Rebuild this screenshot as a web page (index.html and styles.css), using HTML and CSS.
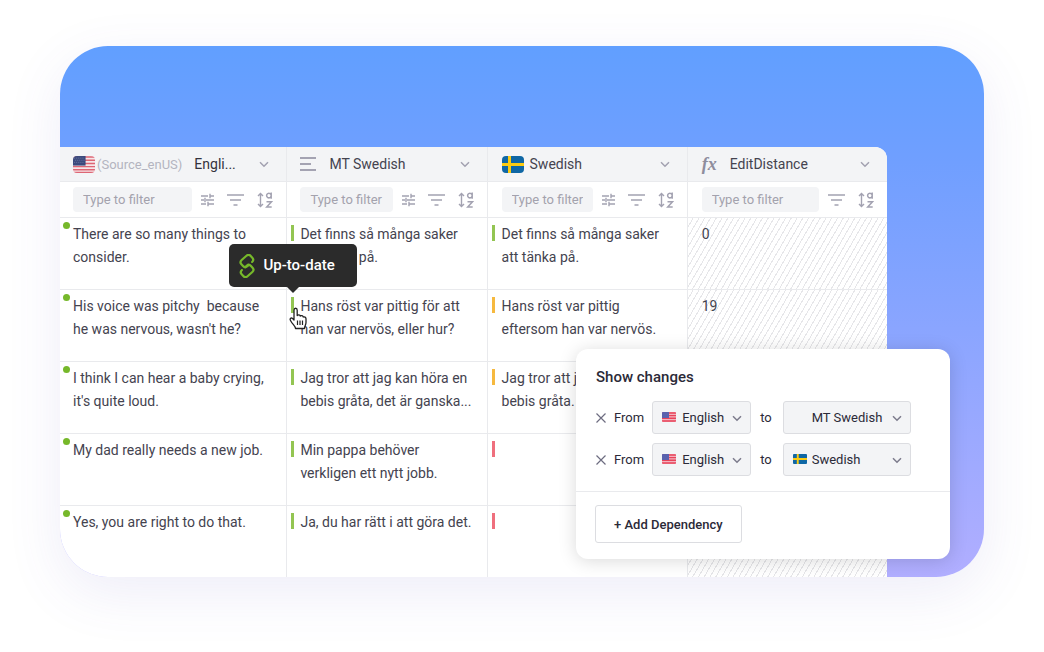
FILE: index.html
```html
<!DOCTYPE html>
<html lang="en">
<head>
  <meta charset="UTF-8" />
  <meta name="viewport" content="width=device-width, initial-scale=1.0"/>
  <title>Translation dependencies</title>
  <link rel="stylesheet" href="styles.css">
</head>
<body>
  <!-- shared icons -->
  <svg class="sprite" aria-hidden="true">
    <symbol id="flag-us" viewBox="0 0 21 16" preserveAspectRatio="none">
      <rect width="21" height="16" fill="#f6e6e9"/>
      <path d="M0 1h21M0 4h21M0 7h21M0 10h21M0 13h21M0 15.5h21" stroke="#dd6674" stroke-width="1.4"/>
      <rect width="12" height="9" fill="#3c4a7d"/>
      <path d="M1 2h10M2 4h9M1 6h10" stroke="#7481ab" stroke-width="0.7" stroke-dasharray="1 1"/>
    </symbol>
    <symbol id="flag-us-small" viewBox="0 0 14 10" preserveAspectRatio="none">
      <rect width="14" height="10" fill="#f3b3bf"/>
      <path d="M0 1h14M0 3.6h14M0 6.3h14M0 9h14" stroke="#e8435a" stroke-width="1.4"/>
      <rect width="7" height="6" fill="#5a62ae"/>
    </symbol>
    <symbol id="flag-se" viewBox="0 0 22 16" preserveAspectRatio="none">
      <rect width="22" height="16" fill="#0f67a5"/>
      <path d="M7.5 0v16M0 8h22" stroke="#fbcb12" stroke-width="3"/>
    </symbol>
    <symbol id="chevron" viewBox="0 0 10 7">
      <path d="M1 1.2l4 4 4-4" fill="none" stroke="currentColor" stroke-width="1.5"/>
    </symbol>
    <symbol id="tune" viewBox="0 0 13 14">
      <path d="M0 3h7M9 3h4M9 0.8v4.4M0 7h3M5 7h8M4 4.8v4.4M0 11h5M7 11h6M7 8.8v4.4" fill="none" stroke="currentColor" stroke-width="1.4"/>
    </symbol>
    <symbol id="filter" viewBox="0 0 17 14">
      <path d="M0 2h17M3 7h11M6.5 12h4" fill="none" stroke="currentColor" stroke-width="1.7"/>
    </symbol>
    <symbol id="sort" viewBox="0 0 16 16">
      <path d="M3.5 1.5v13M1 4l2.5-2.5L6 4M1 12l2.5 2.5L6 12" fill="none" stroke="currentColor" stroke-width="1.4"/>
      <path d="M14.2 0.5v6.2M14.2 3.5a2.3 2.3 0 1 0 0 .1M9.5 9.7h5L9.7 15h5" fill="none" stroke="currentColor" stroke-width="1.5"/>
    </symbol>
  </svg>

  <main class="stage">
    <table class="grid">
      <colgroup>
        <col class="col-source">
        <col class="col-target">
        <col class="col-target">
        <col class="col-distance">
      </colgroup>
      <thead>
        <tr class="titles">
          <th>
            <div class="title">
              <svg class="flag"><use href="#flag-us"/></svg>
              <span class="source">(Source_enUS)</span>
              <span class="name clipped">Engli...</span>
              <button class="more" aria-label="English column menu"><svg><use href="#chevron"/></svg></button>
            </div>
          </th>
          <th>
            <div class="title">
              <svg class="lines" viewBox="0 0 17 14"><path d="M0 1h16M0 7h11M0 13h16" stroke="currentColor" stroke-width="1.8"/></svg>
              <span class="name">MT Swedish</span>
              <button class="more" aria-label="MT Swedish column menu"><svg><use href="#chevron"/></svg></button>
            </div>
          </th>
          <th>
            <div class="title">
              <svg class="flag"><use href="#flag-se"/></svg>
              <span class="name">Swedish</span>
              <button class="more" aria-label="Swedish column menu"><svg><use href="#chevron"/></svg></button>
            </div>
          </th>
          <th>
            <div class="title">
              <span class="fx">fx</span>
              <span class="name">EditDistance</span>
              <button class="more" aria-label="EditDistance column menu"><svg><use href="#chevron"/></svg></button>
            </div>
          </th>
        </tr>
        <tr class="filters">
          <td>
            <div class="filter">
              <input type="text" placeholder="Type to filter" aria-label="Filter English">
              <button aria-label="Options"><svg class="tune"><use href="#tune"/></svg></button>
              <button aria-label="Filter"><svg class="funnel"><use href="#filter"/></svg></button>
              <button aria-label="Sort"><svg class="sort"><use href="#sort"/></svg></button>
            </div>
          </td>
          <td>
            <div class="filter">
              <input type="text" placeholder="Type to filter" aria-label="Filter MT Swedish">
              <button aria-label="Options"><svg class="tune"><use href="#tune"/></svg></button>
              <button aria-label="Filter"><svg class="funnel"><use href="#filter"/></svg></button>
              <button aria-label="Sort"><svg class="sort"><use href="#sort"/></svg></button>
            </div>
          </td>
          <td>
            <div class="filter">
              <input type="text" placeholder="Type to filter" aria-label="Filter Swedish">
              <button aria-label="Options"><svg class="tune"><use href="#tune"/></svg></button>
              <button aria-label="Filter"><svg class="funnel"><use href="#filter"/></svg></button>
              <button aria-label="Sort"><svg class="sort"><use href="#sort"/></svg></button>
            </div>
          </td>
          <td>
            <div class="filter">
              <input type="text" placeholder="Type to filter" aria-label="Filter EditDistance">
              <button aria-label="Filter"><svg class="funnel"><use href="#filter"/></svg></button>
              <button aria-label="Sort"><svg class="sort"><use href="#sort"/></svg></button>
            </div>
          </td>
        </tr>
      </thead>
      <tbody>
        <tr>
          <td class="dot">There are so many things to consider.</td>
          <td class="mark">Det finns så många saker att tänka på.</td>
          <td class="mark">Det finns så många saker att tänka på.</td>
          <td class="computed">0</td>
        </tr>
        <tr>
          <td class="dot">His voice was pitchy&nbsp; because he was nervous, wasn't he?</td>
          <td class="mark">
            Hans röst var pittig för att han var nervös, eller hur?
            <div class="tooltip" role="tooltip">
              <svg viewBox="0 0 20 24">
                <g fill="none" stroke="#76b82a" stroke-width="2.2" stroke-linecap="round">
                  <path transform="translate(9 12) rotate(-42)" d="M2 .4H0a3 3 0 0 1-3-3V-5a3 3 0 0 1 3-3H6.500a3 3 0 0 1 3 3V-2.600a3 3 0 0 1-3 3"/>
                  <path transform="translate(9 12) rotate(138)" d="M2 .4H0a3 3 0 0 1-3-3V-5a3 3 0 0 1 3-3H6.500a3 3 0 0 1 3 3V-2.600a3 3 0 0 1-3 3"/>
                </g>
              </svg>
              Up-to-date
            </div>
            <svg class="pointer" viewBox="0 0 18 23">
              <path d="M5 13V3.2C5 .6 8.2.6 8.2 3.2V8.5C9 7.4 11 7.6 11.3 9 12.3 8.2 14 8.6 14.2 10 15.5 9.4 17 10.3 17 11.8V15.5C17 18 15.5 19 15.5 21.5H6.5C6.5 19 3.5 17.5 1.5 13.5.4 11.5 2.2 10.3 3.6 11.5Z" fill="#fff" stroke="#222" stroke-width="1.3" stroke-linejoin="round"/>
              <path d="M8.5 13.5v4.5M11 13.5v4.5M13.5 13.5v4.5" stroke="#222" stroke-width="1.2"/>
            </svg>
          </td>
          <td class="mark stale">Hans röst var pittig eftersom han var nervös.</td>
          <td class="computed">19</td>
        </tr>
        <tr>
          <td class="dot">I think I can hear a baby crying, it's quite loud.</td>
          <td class="mark">Jag tror att jag kan höra en bebis gråta, det är ganska...</td>
          <td class="mark stale">Jag tror att jag kan höra en bebis gråta.</td>
          <td class="computed"></td>
        </tr>
        <tr>
          <td class="dot">My dad really needs a new job.</td>
          <td class="mark">Min pappa behöver verkligen ett nytt jobb.</td>
          <td class="mark missing"></td>
          <td class="computed"></td>
        </tr>
        <tr>
          <td class="dot">Yes, you are right to do that.</td>
          <td class="mark">Ja, du har rätt i att göra det.</td>
          <td class="mark missing"></td>
          <td class="computed"></td>
        </tr>
      </tbody>
    </table>

    <section class="panel">
      <div class="changes">
        <h2>Show changes</h2>
        <div class="dependency">
          <button class="remove" aria-label="Remove dependency"><svg viewBox="0 0 10 10"><path d="M0.5 0.5l9 9M9.5 0.5l-9 9" stroke="currentColor" stroke-width="1.2"/></svg></button>
          <label for="from-1">From</label>
          <div class="select from">
            <svg class="flag"><use href="#flag-us-small"/></svg>
            <select id="from-1"><option>English</option></select>
            <svg class="arrow"><use href="#chevron"/></svg>
          </div>
          <label for="to-1">to</label>
          <div class="select to">
            <select id="to-1"><option>MT Swedish</option></select>
            <svg class="arrow"><use href="#chevron"/></svg>
          </div>
        </div>
        <div class="dependency">
          <button class="remove" aria-label="Remove dependency"><svg viewBox="0 0 10 10"><path d="M0.5 0.5l9 9M9.5 0.5l-9 9" stroke="currentColor" stroke-width="1.2"/></svg></button>
          <label for="from-2">From</label>
          <div class="select from">
            <svg class="flag"><use href="#flag-us-small"/></svg>
            <select id="from-2"><option>English</option></select>
            <svg class="arrow"><use href="#chevron"/></svg>
          </div>
          <label for="to-2">to</label>
          <div class="select to">
            <svg class="flag"><use href="#flag-se"/></svg>
            <select id="to-2"><option>Swedish</option></select>
            <svg class="arrow"><use href="#chevron"/></svg>
          </div>
        </div>
      </div>
      <div class="actions">
        <button class="add">+ Add Dependency</button>
      </div>
    </section>
  </main>
</body>
</html>
```
FILE: styles.css
```css
* {
  box-sizing: border-box;
}

body {
  margin: 0;
  padding: 46px 60px 75px;
  background: #fff;
  color: #44434f;
  font-family: Roboto, sans-serif;
  font-size: 14px;
}

button {
  padding: 0;
  border: 0;
  background: none;
  color: inherit;
  font: inherit;
}

svg {
  display: block;
}

.sprite {
  position: absolute;
  width: 0;
  height: 0;
}

.stage {
  position: relative;
  overflow: hidden;
  padding: 101px 97px 0 0;
  border-radius: 48px;
  background: linear-gradient(#619fff, #709fff 22%, #b1aeff);
  box-shadow: 0 16px 56px rgba(88, 76, 190, 0.1);
}

/* table */
.grid {
  width: 100%;
  table-layout: fixed;
  border-collapse: separate;
  border-spacing: 0;
  overflow: hidden;
  border-top-right-radius: 12px;
  background: #fff;
}

.col-source {
  width: 27.5%;
}

.col-target {
  width: 24.2%;
}

.grid th,
.grid td {
  padding: 0 13px 0 13px;
  border-right: 1px solid #e9eaed;
  border-bottom: 1px solid #e9eaed;
  text-align: left;
  font-weight: 400;
}

.grid th:nth-child(n+3),
.grid td:nth-child(n+3) {
  padding-left: 14px;
}

.grid th:last-child,
.grid td:last-child {
  border-right: 0;
}

.grid tbody tr:last-child td {
  height: 71px;
  border-bottom: 0;
}

.titles th {
  height: 35px;
  background: #f3f4f6;
}

.title {
  display: flex;
  align-items: center;
}

.title .flag {
  width: 22px;
  height: 17px;
  margin-right: 6px;
  border-radius: 4px;
}

.source {
  margin: 0 12px 0 -4px;
  color: #b4b4c0;
  font-size: 13px;
}

.clipped {
  color: #33323d;
}

.lines {
  width: 17px;
  height: 14px;
  margin-right: 12px;
  color: #a4a3b2;
}

.fx {
  width: 18px;
  margin-right: 10px;
  color: #8e8d9d;
  font: italic 700 18px/20px "Liberation Serif", serif;
}

.more {
  margin: 0 4px 0 auto;
  color: #a3a2b1;
}

.more svg,
.arrow {
  width: 10px;
  height: 7px;
}

.filters td {
  height: 36px;
}

.filter {
  display: flex;
  align-items: center;
  gap: 13px;
  color: #a3a2b1;
}

.filter input {
  flex: 1;
  min-width: 0;
  height: 25px;
  margin-right: -4px;
  padding: 0 10px;
  border: 0;
  border-radius: 4px;
  background: #f3f4f6;
  font: 13px Roboto, sans-serif;
}

.filter input::placeholder {
  color: #a3a2ad;
}

.tune {
  width: 13px;
  height: 14px;
}

.funnel {
  width: 17px;
  height: 14px;
}

.sort {
  width: 16px;
  height: 16px;
}

.grid tbody td {
  position: relative;
  height: 72px;
  padding-top: 5px;
  vertical-align: top;
  line-height: 23px;
}

.dot::before {
  content: "";
  position: absolute;
  top: 4px;
  left: 3px;
  width: 7px;
  height: 7px;
  border-radius: 50%;
  background: #76b82a;
}

.mark::before {
  content: "";
  position: absolute;
  top: 7px;
  left: 4px;
  width: 3px;
  height: 16px;
  background: #93c552;
}

.stale::before {
  background: #f6b93f;
}

.missing::before {
  background: #ef6f7d;
}

.grid .computed {
  background: repeating-linear-gradient(120deg, #fff 0 4px, #e6e6e9 4px 5px);
}

.tooltip {
  position: absolute;
  z-index: 1;
  bottom: 74px;
  left: -58px;
  display: flex;
  align-items: center;
  gap: 5px;
  height: 43px;
  padding: 0 22px 0 9px;
  border-radius: 5px;
  background: #2b2b2b;
  color: #fff;
  font-size: 15px;
  font-weight: 500;
  white-space: nowrap;
}

.tooltip svg {
  width: 20px;
  height: 24px;
}

.tooltip::after {
  content: "";
  position: absolute;
  top: 100%;
  left: 58px;
  border: 6px solid transparent;
  border-top-color: #2b2b2b;
  border-bottom: 0;
}

.pointer {
  position: absolute;
  top: 17px;
  left: 2px;
  width: 18px;
  height: 23px;
}

/* dependency panel */
.panel {
  position: absolute;
  right: 34px;
  bottom: 18px;
  width: 374px;
  border-radius: 12px;
  background: #fff;
  box-shadow: 0 2px 18px rgba(0, 0, 0, 0.15);
  color: #2b2a38;
  font-size: 13px;
}

.changes {
  display: flex;
  flex-direction: column;
  gap: 9px;
  padding: 18px 20px 15px;
  border-bottom: 1px solid #e9eaed;
}

.panel h2 {
  margin: 0 0 5px;
  font-size: 15px;
  line-height: 20px;
  font-weight: 500;
}

.dependency {
  display: flex;
  align-items: center;
}

.remove {
  margin-right: 8px;
  color: #6d6c80;
}

.remove svg {
  width: 10px;
  height: 10px;
}

.select {
  position: relative;
}

.from {
  width: 99px;
  margin: 0 9px 0 8px;
}

.to {
  width: 128px;
  margin-left: 11px;
}

.select select {
  display: block;
  width: 100%;
  height: 33px;
  padding: 0 20px 0 29px;
  border: 1px solid #dcdde1;
  border-radius: 3px;
  background: #f3f4f6;
  color: inherit;
  font: inherit;
  appearance: none;
}

.to select {
  padding-left: 28px;
}

.select .flag {
  position: absolute;
  top: 11px;
  left: 10px;
  width: 14px;
  height: 10px;
  border-radius: 1px;
}

.arrow {
  position: absolute;
  top: 14px;
  right: 9px;
  color: #7c7b8c;
  pointer-events: none;
}

.actions {
  padding: 13px 19px 16px;
}

.add {
  height: 38px;
  padding: 0 18px;
  border: 1px solid #dcdde1;
  border-radius: 3px;
  font-weight: 500;
}
```
